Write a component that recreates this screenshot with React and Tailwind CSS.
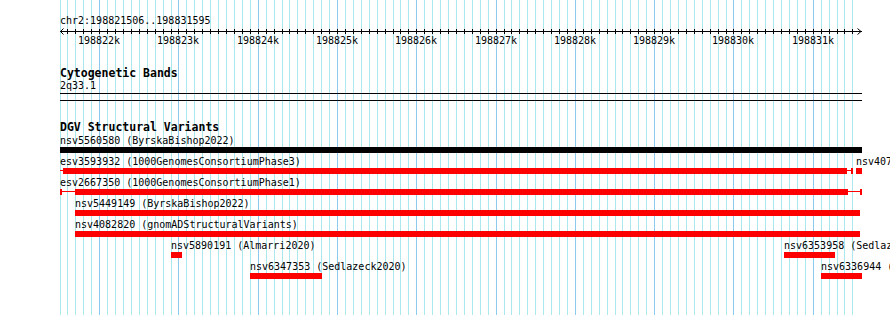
import React from "react";

const GRID = Array.from({ length: 101 }, (_, k) => ({
  x: Math.round(59.5 + k * 7.9286),
  major: k % 10 === 5,
}));

const MAJOR_LABELS = [
  "198822k", "198823k", "198824k", "198825k", "198826k",
  "198827k", "198828k", "198829k", "198830k", "198831k",
];

// Feature rows of the DGV track. All coordinates are absolute page px.
const ROWS = [
  [
    { label: "nsv5560580 (ByrskaBishop2022)", lx: 60, parts: [{ t: "bar", x1: 60, x2: 862, c: "black" }] },
  ],
  [
    {
      label: "esv3593932 (1000GenomesConsortiumPhase3)", lx: 60,
      parts: [
        { t: "thin", x1: 60, x2: 63 },
        { t: "bar", x1: 63, x2: 847 },
        { t: "thin", x1: 847, x2: 852 },
        { t: "tick", x1: 851, x2: 853 },
      ],
    },
    { label: "nsv4078525 (gnomADStructuralVariants)", lx: 856, parts: [{ t: "bar", x1: 856, x2: 862 }] },
  ],
  [
    {
      label: "esv2667350 (1000GenomesConsortiumPhase1)", lx: 60,
      parts: [
        { t: "tick", x1: 60, x2: 62 },
        { t: "thin", x1: 62, x2: 75 },
        { t: "bar", x1: 75, x2: 848 },
        { t: "thin", x1: 848, x2: 861 },
        { t: "tick", x1: 860, x2: 862 },
      ],
    },
  ],
  [
    { label: "nsv5449149 (ByrskaBishop2022)", lx: 75, parts: [{ t: "bar", x1: 75, x2: 860 }] },
  ],
  [
    { label: "nsv4082820 (gnomADStructuralVariants)", lx: 75, parts: [{ t: "bar", x1: 75, x2: 860 }] },
  ],
  [
    { label: "nsv5890191 (Almarri2020)", lx: 171, parts: [{ t: "bar", x1: 171, x2: 182 }] },
    { label: "nsv6353958 (Sedlazeck2020)", lx: 784, parts: [{ t: "bar", x1: 784, x2: 835 }] },
  ],
  [
    { label: "nsv6347353 (Sedlazeck2020)", lx: 250, parts: [{ t: "bar", x1: 250, x2: 322 }] },
    { label: "nsv6336944 (Sedlazeck2020)", lx: 821, parts: [{ t: "bar", x1: 821, x2: 862 }] },
  ],
];

function Part({ p }) {
  const left = p.x1 - 60;
  const width = p.x2 - p.x1;
  if (p.t === "bar") {
    return (
      <div
        className={`absolute top-[11px] h-[6px] ${p.c === "black" ? "bg-black" : "bg-[#ff0000]"}`}
        style={{ left, width }}
      />
    );
  }
  if (p.t === "thin") {
    return <div className="absolute top-[13px] h-[1px] bg-[#ff0000]" style={{ left, width }} />;
  }
  return <div className="absolute top-[11px] h-[6px] bg-[#ff0000]" style={{ left, width }} />;
}

function Ruler() {
  return (
    <svg width="802" height="8" className="block" shapeRendering="crispEdges">
      <line x1="0" y1="3.5" x2="802" y2="3.5" stroke="black" strokeWidth="1" />
      {GRID.slice(1).map((g) => (
        <line key={g.x} x1={g.x - 60 + 0.5} y1="1" x2={g.x - 60 + 0.5} y2="6" stroke="black" strokeWidth="1" />
      ))}
      <polyline points="3.5,0.5 0.5,3.5 3.5,6.5" fill="none" stroke="black" strokeWidth="1" shapeRendering="auto" />
      <polyline points="797.5,0.5 801,3.5 797.5,6.5" fill="none" stroke="black" strokeWidth="1" shapeRendering="auto" />
    </svg>
  );
}

export default function App() {
  const majors = GRID.filter((g) => g.major);
  return (
    <div className="relative w-[890px] h-[315px] overflow-hidden bg-white text-black font-['DejaVu_Sans_Mono','Liberation_Mono',monospace]">
      {/* grid lines */}
      <div className="absolute inset-0">
        {GRID.map((g) => (
          <div
            key={g.x}
            className={`absolute top-0 bottom-0 w-[1px] ${g.major ? "bg-[#8ccaf0]" : "bg-[#aae8ee]"}`}
            style={{ left: g.x }}
          />
        ))}
      </div>

      <div className="relative ml-[60px] w-[802px] flex flex-col">
        {/* ruler */}
        <div className="mt-[16px] h-[10px] text-[10px] leading-[10px] whitespace-nowrap">
          chr2:198821506..198831595
        </div>
        <div className="mt-[2px]">
          <Ruler />
        </div>
        <div className="relative h-[10px] text-[10px] leading-[10px]">
          {majors.map((g, i) => (
            <span key={g.x} className="absolute top-0 -translate-x-1/2 whitespace-nowrap" style={{ left: g.x - 60 }}>
              {MAJOR_LABELS[i]}
            </span>
          ))}
        </div>

        {/* cytogenetic bands */}
        <div className="mt-[21px] h-[12px] text-[11.5px] leading-[12px] font-bold whitespace-nowrap">
          Cytogenetic Bands
        </div>
        <div className="mt-[2px] h-[10px] text-[10px] leading-[10px]">2q33.1</div>
        <div className="mt-[2px] h-[1px] bg-black" />
        <div className="mt-[6px] h-[1px] bg-black" />

        {/* DGV */}
        <div className="mt-[20px] h-[12px] text-[11.5px] leading-[12px] font-bold whitespace-nowrap">
          DGV Structural Variants
        </div>
        <div className="mt-[3px] flex flex-col">
          {ROWS.map((row, ri) => (
            <div key={ri} className="relative h-[21px] text-[10px] leading-[10px]">
              {row.map((f) => (
                <React.Fragment key={f.label}>
                  <span className="absolute top-0 whitespace-nowrap" style={{ left: f.lx - 60 }}>
                    {f.label}
                  </span>
                  {f.parts.map((p, pi) => (
                    <Part key={pi} p={p} />
                  ))}
                </React.Fragment>
              ))}
            </div>
          ))}
        </div>
      </div>
    </div>
  );
}
